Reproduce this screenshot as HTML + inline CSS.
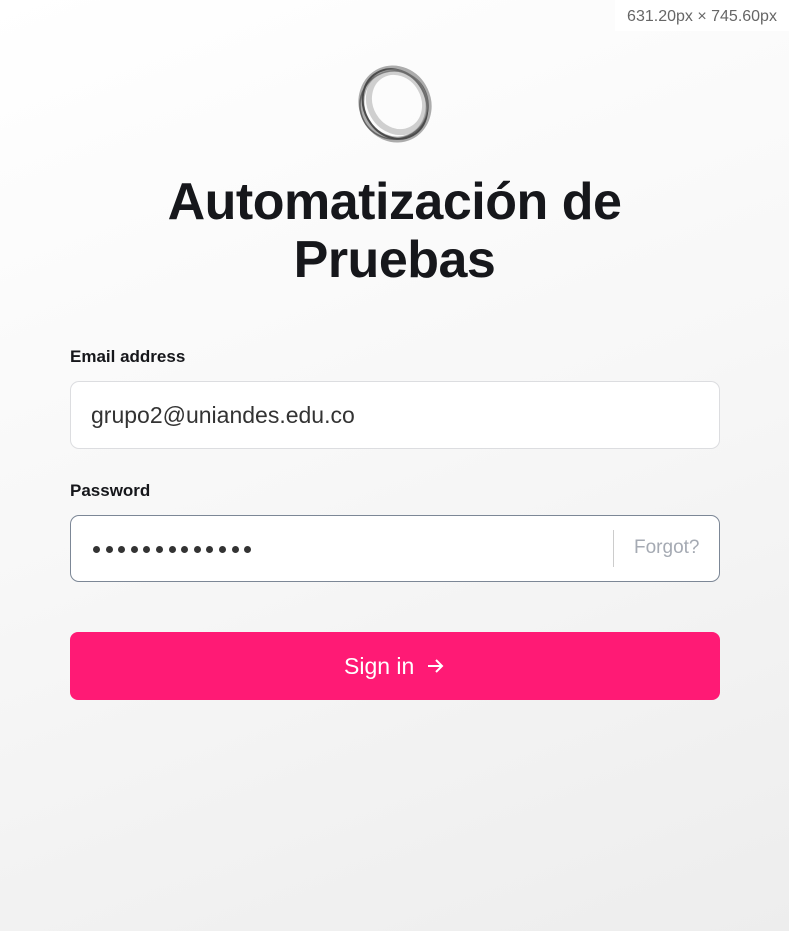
<!DOCTYPE html>
<html><head><meta charset="utf-8"><style>
html,body{margin:0;padding:0}
body{width:789px;height:931px;position:relative;overflow:hidden;font-family:"Liberation Sans",sans-serif;background:linear-gradient(160deg,#ffffff 0%,#f7f7f7 50%,#ededed 100%);}
.dim{position:absolute;right:0;top:0;width:174px;height:31px;background:#fff;color:#666;font-size:16px;line-height:34px;text-align:center}
h1{position:absolute;left:0;width:789px;top:173px;margin:0;text-align:center;font-size:52px;line-height:58px;font-weight:bold;color:#16171b;letter-spacing:-0.5px}
.lbl{position:absolute;left:70px;font-size:17px;font-weight:bold;color:#16171b}
.inp{position:absolute;left:70px;background:#fff;border:1px solid #dcdde0;border-radius:9px;box-sizing:border-box}
.btn{position:absolute;left:70px;top:632px;width:650px;height:68px;background:#ff1a75;border-radius:8px;color:#fff;font-size:23px;line-height:68px}
.dot{position:absolute;top:30px;width:7px;height:7px;border-radius:50%;background:#333}
</style></head><body>
<div class="dim">631.20px × 745.60px</div>
<svg style="position:absolute;left:350px;top:62px" width="90" height="84" viewBox="0 0 90 84">
<g fill="none">
<ellipse cx="45" cy="42" rx="33" ry="36" transform="rotate(-25 45 42)" stroke="#777" stroke-width="6" opacity=".6"/>
<ellipse cx="45" cy="42" rx="31" ry="36" transform="rotate(-30 45 42)" stroke="#333" stroke-width="2" opacity=".8"/>
<ellipse cx="44" cy="43" rx="34" ry="34" transform="rotate(-15 44 43)" stroke="#444" stroke-width="1.5" opacity=".7"/>
<ellipse cx="47" cy="40" rx="27" ry="31" transform="rotate(-30 47 40)" stroke="#999" stroke-width="6" opacity=".45"/>
</g></svg>
<h1>Automatización de<br>Pruebas</h1>
<div class="lbl" style="top:347px">Email address</div>
<div class="inp" style="top:381px;width:650px;height:68px"><span style="position:absolute;left:20px;top:20px;font-size:23px;color:#333">grupo2@uniandes.edu.co</span></div>
<div class="lbl" style="top:481px">Password</div>
<div class="inp" style="top:515px;width:650px;height:67px;border-color:#7c8796">
<div class="dot" style="left:22px"></div><div class="dot" style="left:34.6px"></div><div class="dot" style="left:47.2px"></div><div class="dot" style="left:59.8px"></div><div class="dot" style="left:72.4px"></div><div class="dot" style="left:85px"></div><div class="dot" style="left:97.6px"></div><div class="dot" style="left:110.2px"></div><div class="dot" style="left:122.8px"></div><div class="dot" style="left:135.4px"></div><div class="dot" style="left:148px"></div><div class="dot" style="left:160.6px"></div><div class="dot" style="left:173.2px"></div>
<div style="position:absolute;left:542px;top:14px;width:1px;height:37px;background:#ccc"></div>
<span style="position:absolute;left:563px;top:21px;font-size:19px;color:#a5aab3">Forgot?</span>
</div>
<div class="btn"><span style="position:absolute;left:274px;top:0">Sign in</span>
<svg style="position:absolute;left:356px;top:25px" width="18" height="18" viewBox="0 0 18 18"><path d="M2 9H16M10 3L16 9L10 15" fill="none" stroke="#fff" stroke-width="2"/></svg></div>
</body></html>
